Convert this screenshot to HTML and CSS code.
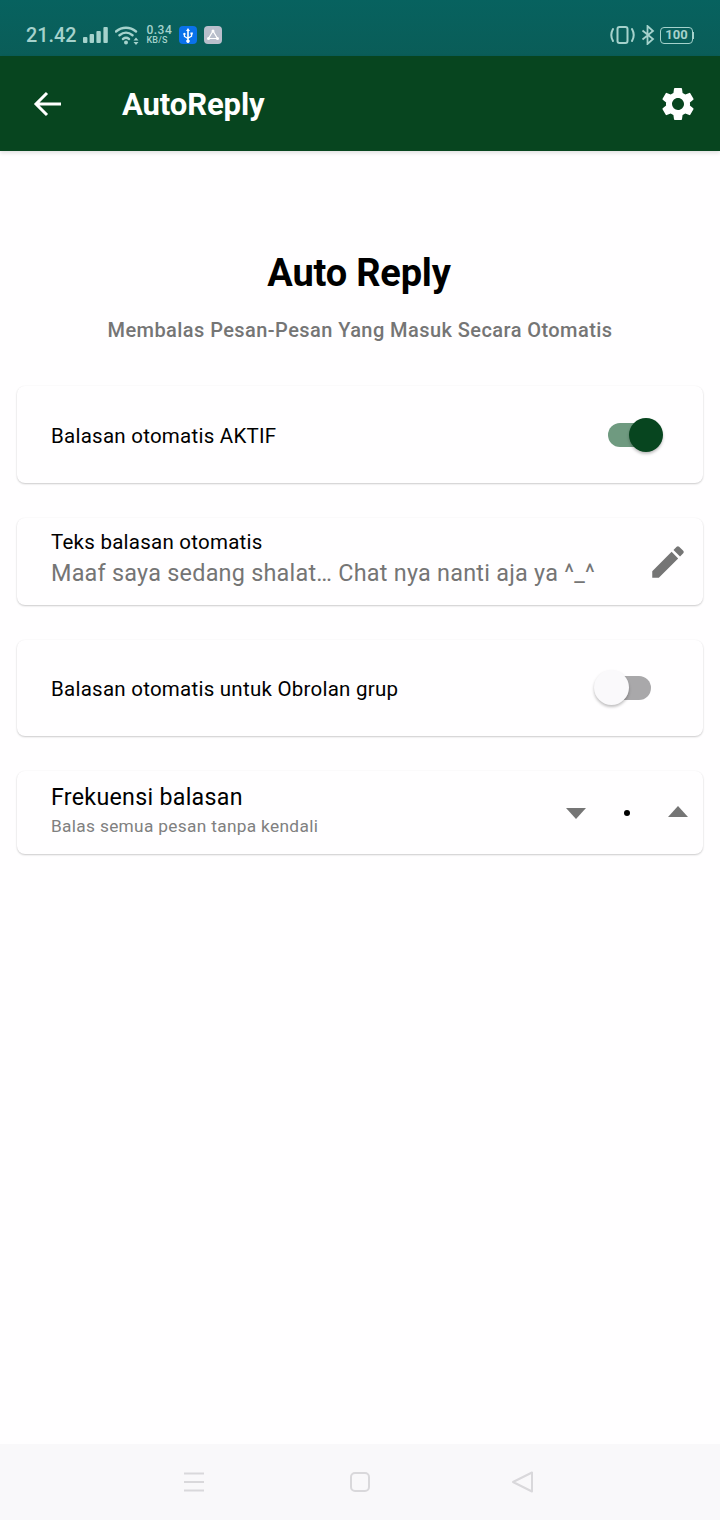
FILE: index.html
```html
<!DOCTYPE html>
<html lang="en">
<head>
  <meta charset="UTF-8" />
  <title>AutoReply</title>
  <link rel="stylesheet" href="styles.css">
</head>
<body>
  <div class="phone">
    <!-- Status bar -->
    <div class="statusbar">
      <div class="status-left">
        <span class="clock">21.42</span>
        <svg class="sb-signal" width="25" height="16" viewBox="0 0 25 16"><rect class="sb-fill" x="0" y="10" width="4.400" height="6" rx="1"/><rect class="sb-fill" x="6.600" y="7" width="4.400" height="9" rx="1"/><rect class="sb-fill" x="13.400" y="4" width="4.400" height="12" rx="1"/><rect class="sb-fill" x="20.400" y="0" width="4.400" height="16" rx="1"/></svg>
        <svg class="sb-wifi" width="24" height="19" viewBox="0 0 24 19"><path class="sb-line" d="M1 5.500C7 .5 15 .5 21 5.500M4.500 9.300C8.500 6 13.500 6 17.500 9.300M8 13C9.800 11.600 12.200 11.600 14 13" stroke-width="2.400" stroke-linecap="round"/><circle class="sb-fill" cx="11" cy="16.500" r="2"/><path class="sb-fill" d="M21 11.500l2.500 3h-5zM21 19l2.500-3h-5z"/></svg>
        <div class="speed"><span>0.34</span><span class="speed-unit">KB/S</span></div>
        <span class="badge badge-usb">
          <svg width="12" height="15" viewBox="0 0 12 15"><path fill="#fff" d="M6 0l2 3H6.800v6l2.200-1.300V6.500H8.400V4.500h2.400v2h-.6v1.900L6.800 10.400v1.300a1.700 1.700 0 1 1-1.600 0v-.9L1.800 8.800V7a1.200 1.200 0 1 1 1.200 0v1.100l2.200 1.300V3H4z"/></svg>
        </span>
        <span class="badge badge-app">
          <svg width="14" height="14" viewBox="0 0 14 14"><path d="M7 3L2.500 10.500h9z" fill="none" stroke="#fff" stroke-width="1.200"/><circle cx="7" cy="3" r="1.500" fill="#fff"/><circle cx="2.500" cy="10.500" r="1.500" fill="#fff"/><circle cx="11.500" cy="10.500" r="1.500" fill="#fff"/></svg>
        </span>
      </div>
      <div class="status-right">
        <svg width="25" height="20" viewBox="0 0 25 20"><rect class="sb-line" x="7.500" y="2" width="10" height="16" rx="2" stroke-width="2"/><path class="sb-line" d="M3 4C.7 8 .7 12 3 16M22 4C24.300 8 24.300 12 22 16" stroke-width="2" stroke-linecap="round"/></svg>
        <svg class="sb-bt" width="14" height="20" viewBox="0 0 14 20"><path class="sb-line" d="M1.500 5.500L12 14l-5.500 5V1L12 6 1.500 14.500" stroke-width="1.800"/></svg>
        <div class="battery"><span class="battery-body">100</span><span class="battery-tip"></span></div>
      </div>
    </div>

    <!-- App bar -->
    <header class="appbar">
      <svg class="back" width="32" height="32" viewBox="0 0 32 32"><path d="M29 16H5M15 5L4 16l11 11" fill="none" stroke="#fff" stroke-width="3"/></svg>
      <h1 class="appbar-title">AutoReply</h1>
      <svg class="gear" width="40" height="40" viewBox="0 0 24 24"><path fill="#fff" d="M19.140 12.940c.04-.3.060-.61.060-.94 0-.32-.02-.64-.07-.94l2.030-1.580a.49.49 0 0 0 .12-.61l-1.920-3.320a.49.49 0 0 0-.59-.22l-2.390.96c-.5-.38-1.030-.7-1.620-.94l-.36-2.540a.48.48 0 0 0-.48-.41h-3.840a.48.48 0 0 0-.47.41l-.36 2.540c-.59.240-1.130.570-1.620.94l-2.390-.96a.48.48 0 0 0-.59.220L2.740 8.870c-.12.210-.08.470.12.610l2.030 1.580c-.05.3-.09.630-.09.940s.02.640.07.940l-2.030 1.580a.49.49 0 0 0-.12.610l1.920 3.320c.12.220.37.290.59.220l2.390-.96c.5.380 1.030.7 1.620.94l.36 2.540c.05.240.24.410.48.410h3.840c.24 0 .44-.17.47-.41l.36-2.540c.59-.24 1.130-.56 1.620-.94l2.390.96c.22.080.47 0 .59-.22l1.920-3.320c.12-.22.070-.47-.12-.61l-2.010-1.580zM12 15.600A3.610 3.610 0 0 1 8.400 12c0-1.980 1.620-3.600 3.600-3.600s3.600 1.620 3.600 3.600-1.620 3.600-3.600 3.600z"/></svg>
    </header>

    <main class="content">
      <h2 class="page-title">Auto Reply</h2>
      <p class="page-sub">Membalas Pesan-Pesan Yang Masuk Secara Otomatis</p>

      <div class="card card-aktif">
        <span class="label">Balasan otomatis AKTIF</span>
        <span class="switch switch-on"><span class="track"></span><span class="thumb"></span></span>
      </div>

      <div class="card card-teks">
        <div class="stack">
          <span class="label">Teks balasan otomatis</span>
          <span class="value">Maaf saya sedang shalat… Chat nya nanti aja ya ^_^</span>
        </div>
        <svg class="pencil" width="42" height="42" viewBox="0 0 24 24"><path fill="#757575" d="M3 17.250V21h3.750L17.810 9.940l-3.750-3.750L3 17.250zM20.710 7.040a1 1 0 0 0 0-1.410l-2.340-2.340a1 1 0 0 0-1.410 0l-1.830 1.830 3.750 3.750 1.830-1.830z"/></svg>
      </div>

      <div class="card card-grup">
        <span class="label">Balasan otomatis untuk Obrolan grup</span>
        <span class="switch switch-off"><span class="track"></span><span class="thumb"></span></span>
      </div>

      <div class="card card-frek">
        <div class="stack">
          <span class="label label-big">Frekuensi balasan</span>
          <span class="hint">Balas semua pesan tanpa kendali</span>
        </div>
        <div class="stepper">
          <span class="arrow-down"></span>
          <span class="dot"></span>
          <span class="arrow-up"></span>
        </div>
      </div>
    </main>

    <!-- Nav bar -->
    <nav class="navbar">
      <svg width="22" height="20" viewBox="0 0 22 20"><path d="M1 1.500h20M1 10h20M1 18.500h20" fill="none" stroke="#d9d8db" stroke-width="2"/></svg>
      <svg width="22" height="22" viewBox="0 0 22 22"><rect x="2" y="2" width="18" height="18" rx="4" fill="none" stroke="#d9d8db" stroke-width="2"/></svg>
      <svg class="nav-back" width="24" height="24" viewBox="0 0 24 24"><path d="M3 12L22 2.500v19z" fill="none" stroke="#d9d8db" stroke-width="2" stroke-linejoin="round"/></svg>
    </nav>
  </div>
</body>
</html>
```

FILE: styles.css
```css
* {
  box-sizing: border-box;
}
body {
  margin: 0;
  font-family: Roboto, "Liberation Sans", sans-serif;
  background: #fffeff;
}
.phone {
  width: 720px;
  height: 1520px;
  display: flex;
  flex-direction: column;
  overflow: hidden;
}

/* status bar */
.statusbar {
  height: 56px;
  flex: none;
  display: flex;
  align-items: center;
  justify-content: space-between;
  padding: 14px 26px 0 26px;
  background: linear-gradient(to bottom, #07625f, #0a5d58);
  color: #a5d2cc;
}
.status-left,
.status-right {
  display: flex;
  align-items: center;
}
.sb-fill {
  fill: #a5d2cc;
}
.sb-line {
  fill: none;
  stroke: #a5d2cc;
}
.clock {
  font-size: 19.800px;
  font-weight: 500;
  margin-right: 7px;
}
.sb-wifi {
  margin-left: 7px;
}
.speed {
  display: flex;
  flex-direction: column;
  font-size: 12px;
  font-weight: 500;
  line-height: 10px;
  margin-left: 7px;
  width: 33px;
  letter-spacing: 0.5px;
}
.speed-unit {
  font-size: 9px;
  letter-spacing: 0.2px;
}
.badge {
  width: 18px;
  height: 18px;
  border-radius: 4px;
  display: flex;
  align-items: center;
  justify-content: center;
}
.badge-usb {
  background: #0a72ea;
}
.badge-app {
  background: #b9bfcc;
  margin-left: 7px;
}
.status-right {
  gap: 6px;
}
.battery {
  display: flex;
  align-items: center;
  margin-left: -1px;
}
.battery-body {
  width: 33px;
  height: 17px;
  border: 1.500px solid #a5d2cc;
  border-radius: 4px;
  font-size: 13px;
  font-weight: 700;
  line-height: 14px;
  text-align: center;
}
.battery-tip {
  width: 1px;
  height: 7px;
  background: #a5d2cc;
}

/* app bar */
.appbar {
  height: 95px;
  flex: none;
  display: flex;
  align-items: center;
  padding: 0 22px 0 32px;
  background: #07451f;
  box-shadow: 0 2px 4px rgba(0,0,0,0.12);
}
.back {
  flex: none;
}
.appbar-title {
  flex: 1;
  margin: 0 0 0 58px;
  padding-top: 2px;
  font-size: 31px;
  font-weight: 700;
  color: #fff;
  letter-spacing: -0.1px;
}

/* content */
.content {
  flex: 1;
  padding: 0 17px;
  display: flex;
  flex-direction: column;
}
.page-title {
  margin: 98px 0 0;
  height: 48px;
  padding-right: 2px;
  font-size: 38px;
  line-height: 48px;
  font-weight: 700;
  text-align: center;
  color: #000;
  letter-spacing: -0.2px;
}
.page-sub {
  margin: 21px 0 0;
  height: 24px;
  font-size: 20px;
  line-height: 24px;
  font-weight: 500;
  text-align: center;
  color: #757575;
  letter-spacing: 0.43px;
}
.card {
  display: flex;
  align-items: center;
  justify-content: space-between;
  padding: 0 34px;
  background: #fffeff;
  border-radius: 8px;
  box-shadow: 0 1px 2px rgba(0,0,0,0.2), 0 0 2px rgba(0,0,0,0.03);
  margin-bottom: 35px;
}
.card-aktif {
  height: 97px;
  margin-top: 44px;
}
.card-teks {
  height: 87px;
}
.card-grup {
  height: 96px;
}
.card-frek {
  height: 83px;
}
.label {
  font-size: 20.500px;
  letter-spacing: 0.25px;
  color: #000;
}
.card > .label {
  margin-top: 2px;
}
.label-big {
  font-size: 23.200px;
  letter-spacing: 0.3px;
}
.stack {
  display: flex;
  flex-direction: column;
}
.card-teks .stack {
  margin-top: -7px;
}
.card-frek .stack {
  margin-top: -6px;
}
.value {
  font-size: 23.400px;
  letter-spacing: 0.24px;
  color: #757575;
  margin-top: 5px;
}
.hint {
  font-size: 17.300px;
  letter-spacing: 0.32px;
  color: #808080;
  margin-top: 5px;
}
.pencil {
  margin-right: -20px;
}

/* switches */
.switch {
  position: relative;
  height: 34px;
  flex: none;
}
.switch .track {
  position: absolute;
  top: 5px;
  height: 24px;
  width: 44px;
  border-radius: 12px;
}
.switch .thumb {
  position: absolute;
  top: 0;
  width: 34px;
  height: 34px;
  border-radius: 50%;
  box-shadow: 0 2px 3px rgba(0,0,0,0.25);
}
.switch-on {
  width: 55px;
  margin-right: 6px;
}
.switch-on .track {
  left: 0;
  background: #6f9a80;
}
.switch-on .thumb {
  left: 21px;
  background: #07451f;
}
.switch-off {
  width: 57px;
  margin-right: 18px;
  margin-top: -3px;
}
.switch-off .track {
  top: 6px;
  right: 0;
  background: #a9a8aa;
}
.switch-off .thumb {
  left: 0;
  width: 35px;
  height: 35px;
  background: #faf9fb;
}

/* stepper */
.stepper {
  display: flex;
  align-items: center;
  gap: 38px;
  margin-right: -19px;
}
.arrow-down,
.arrow-up {
  width: 0;
  height: 0;
  border-left: 10.500px solid transparent;
  border-right: 10.500px solid transparent;
}
.arrow-down {
  border-top: 11px solid #757575;
  margin-top: 1px;
}
.arrow-up {
  border-bottom: 11px solid #757575;
  margin-bottom: 3px;
}
.dot {
  width: 6px;
  height: 6px;
  border-radius: 50%;
  background: #000;
}

/* nav bar */
.navbar {
  height: 76px;
  flex: none;
  display: flex;
  align-items: center;
  gap: 144px;
  padding: 0 0 0 183px;
  background: #f9f8fa;
}
.nav-back {
  margin-left: -5px;
}
```
